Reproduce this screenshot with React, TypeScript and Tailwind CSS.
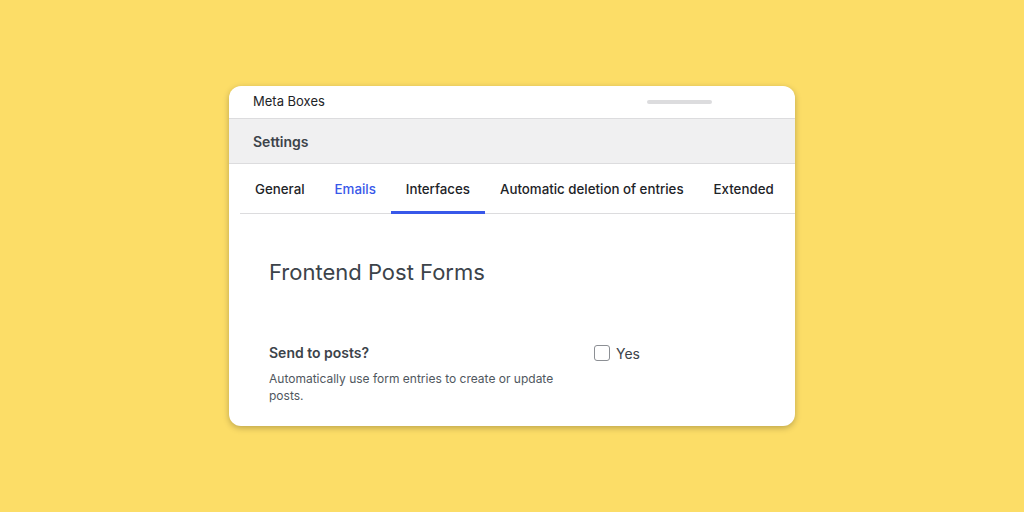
import React from "react";

export default function App() {
  const tabs = ["General", "Emails", "Interfaces", "Automatic deletion of entries", "Extended"];
  return (
    <div
      className="w-[1024px] h-[512px] bg-[#fcdd67] flex items-center justify-center"
      style={{ fontFamily: "Inter, 'Noto Sans', sans-serif" }}
    >
      <div className="w-[566px] h-[340px] bg-white rounded-[12px] overflow-hidden shadow-[0_2px_6px_rgba(0,0,0,0.25)] flex flex-col">
        <div className="h-[33px] shrink-0 flex items-center justify-between pl-[24px] pr-[83px] border-b border-[#dcdcde]">
          <span className="text-[13px] text-[#1d2327]">Meta Boxes</span>
          <div className="w-[65px] h-[4px] rounded-full bg-[#dcdcde]" />
        </div>
        <div className="h-[45px] shrink-0 bg-[#f0f0f1] flex items-center pl-[24px] border-b border-[#dcdcde]">
          <span className="text-[14px] font-semibold text-[#3c434a]">Settings</span>
        </div>
        <div className="ml-[11px] flex h-[50px] shrink-0 border-b border-[#dcdcde] whitespace-nowrap">
          {tabs.map((t) => (
            <div
              key={t}
              className={
                "px-[15px] pt-[4px] flex items-center text-[13.3px] font-medium border-b-[3px] -mb-px " +
                (t === "Interfaces"
                  ? "border-[#3858e9] text-[#1d2327]"
                  : t === "Emails"
                  ? "border-transparent text-[#3858e9]"
                  : "border-transparent text-[#1d2327]")
              }
            >
              {t}
            </div>
          ))}
        </div>
        <div className="pl-[40px] pt-[44px]">
          <h1 className="text-[22px] text-[#3c434a] leading-[28px]">Frontend Post Forms</h1>
          <div className="flex mt-[58px]">
            <div className="w-[325px]">
              <div className="text-[14px] font-semibold text-[#3c434a] leading-[18px]">Send to posts?</div>
              <div className="mt-[8px] w-[300px] text-[12px] text-[#50575e] leading-[17px]">
                Automatically use form entries to create or update posts.
              </div>
            </div>
            <label className="flex items-center gap-[6px] h-[18px]">
              <span className="w-[16px] h-[16px] border border-[#8c8f94] rounded-[3px] bg-white" />
              <span className="text-[14px] text-[#3c434a]">Yes</span>
            </label>
          </div>
        </div>
      </div>
    </div>
  );
}
